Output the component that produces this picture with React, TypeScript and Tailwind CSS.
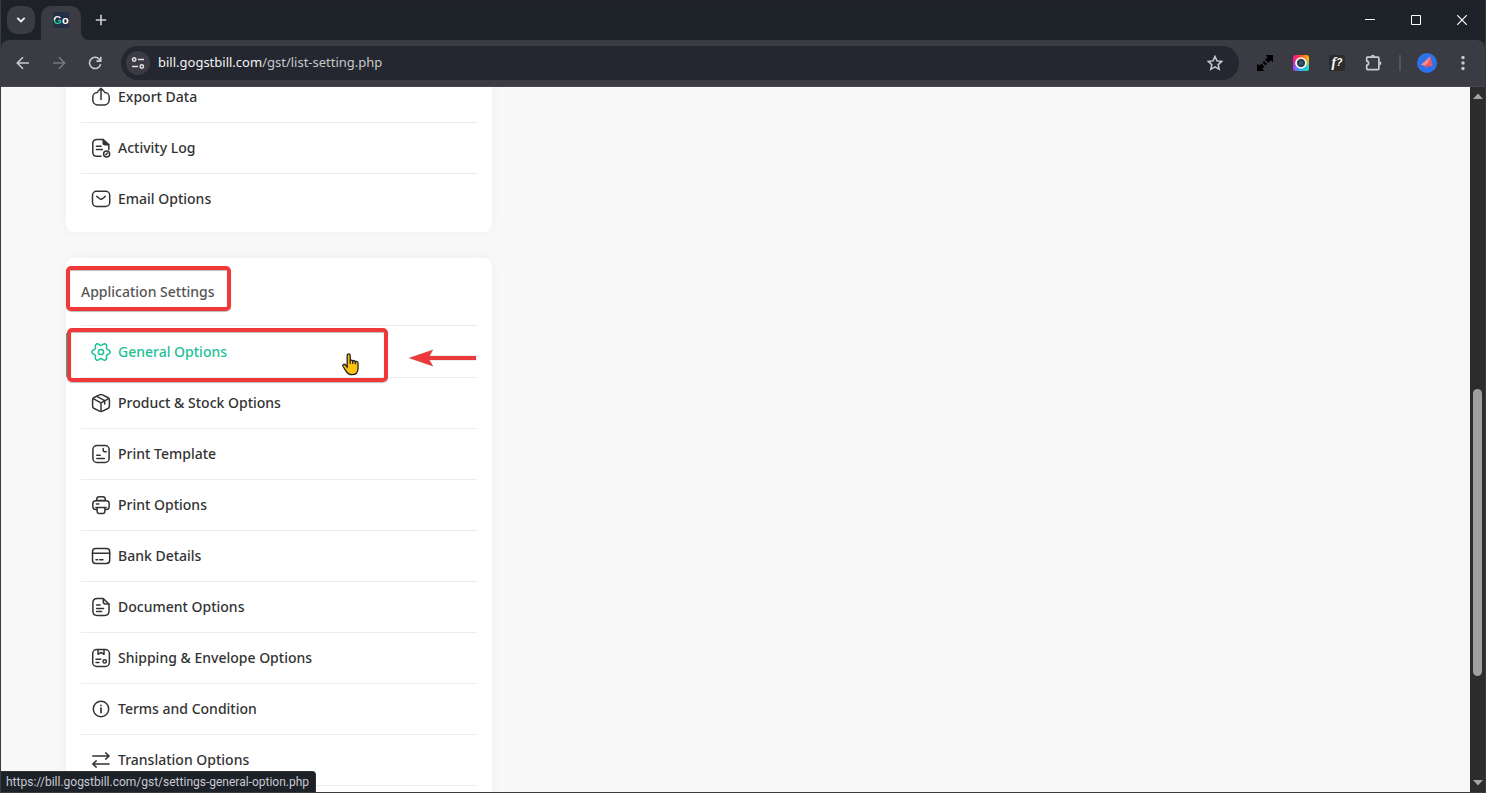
import type { ReactNode } from "react";

const gearOutline =
  "M" +
  Array.from({ length: 72 }, (_, i) => {
    const a = (i / 72) * Math.PI * 2;
    const r = 7.9 + 1.3 * Math.cos(6 * a);
    return `${(10 + r * Math.cos(a)).toFixed(2)} ${(10 + r * Math.sin(a)).toFixed(2)}`;
  }).join("L") +
  "Z";

function Icon({ children, size = 20 }: { children: ReactNode; size?: number }) {
  return (
    <svg
      width={size}
      height={size}
      viewBox="0 0 20 20"
      fill="none"
      stroke="currentColor"
      strokeWidth="1.5"
      strokeLinecap="round"
      strokeLinejoin="round"
      aria-hidden="true"
      className="shrink-0"
    >
      {children}
    </svg>
  );
}

const icons = {
  export: (
    <>
      <path d="M6.5 5.600H6A4.400 4.400 0 0 0 1.800 10v2.800A5 5 0 0 0 6.400 18h7.200a5 5 0 0 0 4.600-5.200V10A4.400 4.400 0 0 0 14 5.600h-.5" />
      <path d="M10 12.600V1.600M7 4.200l3-2.800 3 2.800" />
    </>
  ),
  activity: (
    <>
      <path d="M10 18.300H6.200C3.200 18.300 1.800 17 1.800 14.200V5.600C1.800 2.900 3.200 1.600 6.200 1.600h6L17.800 6.600v5" />
      <path d="M12.200 1.600v3.200c0 1.300.6 1.900 1.900 1.900h3.500" fill="currentColor" />
      <path d="M5.400 8.200h4.600M5.400 11.400h6" />
      <circle cx="15.600" cy="16" r="3" />
      <path d="M14.800 16.800l1.600-1.700" />
    </>
  ),
  mail: (
    <>
      <rect x="1.500" y="2.300" width="17.200" height="15.200" rx="4" />
      <path d="M5.800 7.400l2.600 2.100c1 .8 2.300.8 3.300 0l2.600-2.100" />
    </>
  ),
  gear: (
    <>
      <path d={gearOutline} />
      <circle cx="10" cy="10" r="2.600" />
    </>
  ),
  box: (
    <>
      <path d="M8.500 1.800 3.200 4.500C2.100 5.100 1.600 5.900 1.600 7.100v5.800c0 1.200.5 2 1.600 2.600l5.300 2.700c1 .5 2 .5 3 0l5.300-2.700c1.100-.6 1.600-1.400 1.600-2.600V7.100c0-1.200-.5-2-1.600-2.600l-5.300-2.700c-1-.5-2-.5-3 0z" />
      <path d="M2.200 5.700 10 9.800l7.800-4.100M10 9.800v8.600M5.800 3.400l7.900 4.300v3.400" />
    </>
  ),
  template: (
    <>
      <rect x="1.900" y="1.600" width="16.200" height="16.900" rx="4" />
      <path d="M12.200 4.500v1.700c0 1 .5 1.500 1.500 1.500h1.500M5.800 11.200h3.400M5.800 14.500h7.500" />
    </>
  ),
  printer: (
    <>
      <path d="M5.700 5.600V4.300c0-1.700.8-2.600 2.500-2.600h3.600c1.700 0 2.500.9 2.500 2.600v1.300z" />
      <path d="M5.500 14.500H4.700c-2 0-2.900-1-2.900-3V8.700c0-2 .9-3 2.900-3h10.600c2 0 2.900 1 2.900 3v2.800c0 2-.9 3-2.900 3h-.8" />
      <path d="M6.100 12.400h7.800v3.800c0 1.500-.7 2.300-2.200 2.300H8.300c-1.500 0-2.200-.8-2.200-2.300zM4.900 12.400h10.200M5.500 9.100h2.300" />
    </>
  ),
  card: (
    <>
      <rect x="1.500" y="2.600" width="17.200" height="14.800" rx="3.200" />
      <path d="M1.500 7.200h17.200M5 13.700h1.600M8.600 13.700h3.400" />
    </>
  ),
  document: (
    <>
      <path d="M12.200 1.600h-6C3.300 1.600 1.900 2.900 1.900 5.600v8.700c0 2.800 1.400 4.100 4.300 4.100h7.500c2.900 0 4.300-1.300 4.300-4.100V7z" />
      <path d="M12.300 1.700v3c0 1.500.7 2.200 2.200 2.200h3.300" />
      <path d="M5.600 8h3.500M5.600 11.400h7M5.600 14.600h5" />
    </>
  ),
  shipping: (
    <>
      <rect x="1.700" y="1.600" width="16.700" height="16.900" rx="4" />
      <path d="M7 1.800v4.500l3-1.800 3 1.800V1.800M5 11.300h4.700M5 14.600h3" />
      <circle cx="13.700" cy="13.400" r="1.700" />
    </>
  ),
  info: (
    <>
      <circle cx="10" cy="10" r="7.700" />
      <path d="M10 9v4.600M10 6.300v.2" strokeWidth="1.700" />
    </>
  ),
  swap: <path d="M1.800 6h16.300M14.700 2.900 18.100 6l-3.400 3.100M18.100 14H1.800M5.200 17.100 1.800 14l3.400-3.100" />,
};

function MenuRow({ icon, label, active, last }: { icon: ReactNode; label: string; active?: boolean; last?: boolean }) {
  return (
    <li className={last ? "" : "border-b border-[#ebebeb]"}>
      <a
        href="#"
        className={`flex h-[50px] items-center gap-[7px] pl-2.5 text-sm font-medium ${active ? "text-[#1dbf96]" : "text-[#333]"}`}
      >
        <Icon>{icon}</Icon>
        {label}
      </a>
    </li>
  );
}

function BarButton({ label, children }: { label: string; children: ReactNode }) {
  return (
    <button type="button" aria-label={label} className="flex size-7 shrink-0 items-center justify-center">
      {children}
    </button>
  );
}

function TitleBar() {
  return (
    <header className="flex h-10 shrink-0 items-center border-t-2 border-[#202125] bg-[#1d2128] pl-1.5 text-white">
      <button type="button" aria-label="Search tabs" className="mb-0.5 flex size-7 items-center justify-center rounded-[10px] bg-[#3a3b43]">
        <svg width="10" height="6" viewBox="0 0 10 6" fill="none" stroke="#f0f0f2" strokeWidth="1.800">
          <path d="M1.300.8 5 4.500 8.700.8" />
        </svg>
      </button>
      <div className="ml-1.5 flex h-[34px] w-10 items-start justify-center self-end rounded-t-[10px] bg-[#3a3b43] pt-1.5">
        <span className="flex size-4 items-center justify-center bg-[#253044] font-['Liberation_Sans',sans-serif] text-[11px] leading-none font-bold text-white">
          <span className="bg-linear-to-b from-white from-50% to-[#20c997] to-50% bg-clip-text text-transparent">G</span>o
        </span>
      </div>
      <svg width="8" height="8" viewBox="0 0 8 8" className="self-end" aria-hidden="true">
        <path d="M0 0v8h8A8 8 0 0 1 0 0z" fill="#3a3b43" />
      </svg>
      <button type="button" aria-label="New tab" className="mb-0.5 flex size-6 items-center justify-center">
        <svg width="12" height="12" viewBox="0 0 12 12" stroke="#d0d1d6" strokeWidth="1.600">
          <path d="M6 .8v10.400M.8 6h10.400" />
        </svg>
      </button>
      <div className="mb-0.5 ml-auto flex h-full">
        <button type="button" aria-label="Minimize" className="flex w-[46px] items-center justify-center">
          <svg width="10" height="10" viewBox="0 0 10 10"><path d="M0 4h10v1H0z" fill="white" /></svg>
        </button>
        <button type="button" aria-label="Maximize" className="flex w-[46px] items-center justify-center">
          <svg width="10" height="10" viewBox="0 0 10 10" fill="none" stroke="white"><path d="M.5.5h9v9h-9z" /></svg>
        </button>
        <button type="button" aria-label="Close" className="flex w-[46px] items-center justify-center">
          <svg width="10" height="10" viewBox="0 0 10 10" stroke="white" strokeWidth="1.200"><path d="m.2.2 9.600 9.600M9.800.2.200 9.800" /></svg>
        </button>
      </div>
    </header>
  );
}

function Toolbar() {
  return (
    <div className="bg-[#1d2128]">
      <div className="flex h-[47px] items-center gap-2 rounded-t-lg border-b border-[#4a464d] bg-[#3a3b43] px-2">
        <BarButton label="Back">
          <svg width="14" height="14" viewBox="0 0 14 14" fill="none" stroke="#c9cad2" strokeWidth="1.600"><path d="M13 7H1.500M7 1.300 1.300 7 7 12.700" /></svg>
        </BarButton>
        <BarButton label="Forward">
          <svg width="14" height="14" viewBox="0 0 14 14" fill="none" stroke="#75767e" strokeWidth="1.600"><path d="M1 7h11.500M7 1.300 12.700 7 7 12.700" /></svg>
        </BarButton>
        <BarButton label="Reload">
          <svg width="14" height="14" viewBox="0 0 14 14" fill="none" stroke="#c9cad2" strokeWidth="1.600"><path d="M12.600 8.100A5.600 5.600 0 1 1 11.500 3.400L12.600 4.600M12.800.7v4.400H8.400" /></svg>
        </BarButton>
        <div className="mx-1 flex h-[34px] min-w-0 flex-1 items-center rounded-full bg-[#24272f] pr-2.5 pl-[5px]">
          <button type="button" aria-label="View site information" className="flex size-6 shrink-0 items-center justify-center rounded-full bg-[#3a3b43]">
            <svg width="14" height="14" viewBox="0 0 14 14" fill="none" stroke="#e2e2e6" strokeWidth="1.500">
              <circle cx="3.200" cy="3.500" r="1.700" />
              <path d="M7 3.500h6M1 10.500h6" />
              <circle cx="10.800" cy="10.500" r="1.700" />
            </svg>
          </button>
          <a href="#" className="ml-2 flex-1 truncate text-[13px] text-[#c7c8cc]">
            <span className="text-[#f3f3f4]">bill.gogstbill.com</span>/gst/list-setting.php
          </a>
          <BarButton label="Bookmark this page">
            <svg width="16" height="16" viewBox="0 0 16 16" fill="none" stroke="#c9cad2" strokeWidth="1.500"><path d="m8 1.500 2 4.400 4.800.5-3.600 3.200 1 4.700L8 11.900l-4.200 2.400 1-4.700L1.200 6.400 6 5.900z" /></svg>
          </BarButton>
        </div>
        <BarButton label="Full page capture">
          <svg width="16" height="16" viewBox="0 0 16 16" fill="black">
            <path d="M8.500 0H16v7.500l-2.200-2.200-2.600 2.600-3.100-3.100 2.600-2.600zM7.500 16H0V8.500l2.200 2.200 2.100-2.100 3.100 3.100-2.100 2.100z" />
            <path d="m5.500 7.600 1.600-1.600 2.900 2.900-1.600 1.600z" />
          </svg>
        </BarButton>
        <BarButton label="Screen recorder">
          <svg width="16" height="16" viewBox="0 0 16 16">
            <defs>
              <linearGradient id="recTop"><stop stopColor="#f2188f" /><stop offset=".5" stopColor="#ff4a2a" /><stop offset="1" stopColor="#ffc412" /></linearGradient>
              <linearGradient id="recBottom"><stop stopColor="#a93cf0" /><stop offset=".5" stopColor="#22b4f0" /><stop offset="1" stopColor="#1fdcc0" /></linearGradient>
              <linearGradient id="recFade" x2="0" y2="1"><stop offset=".25" stopColor="black" /><stop offset=".8" stopColor="white" /></linearGradient>
              <mask id="recMask"><path d="M0 0h16v16H0z" fill="url(#recFade)" /></mask>
            </defs>
            <rect width="16" height="16" rx="3" fill="url(#recTop)" />
            <rect width="16" height="16" rx="3" fill="url(#recBottom)" mask="url(#recMask)" />
            <circle cx="8" cy="8" r="5" fill="#34495a" stroke="white" strokeWidth="1.600" />
            <circle cx="8" cy="8" r="2.600" fill="#3f5a70" stroke="#1f2c36" strokeWidth=".8" />
          </svg>
        </BarButton>
        <BarButton label="Font finder">
          <span className="flex size-4 items-center justify-center rounded-[2px] bg-[#2c2c2c] font-['Liberation_Serif',serif] text-sm leading-none font-bold text-white italic">
            f<span className="font-['Liberation_Sans',sans-serif] text-[10px]">?</span>
          </span>
        </BarButton>
        <BarButton label="Extensions">
          <svg width="18" height="18" viewBox="0 0 18 18" fill="none" stroke="#c9cad2" strokeWidth="1.700" strokeLinejoin="round">
            <path d="M3.200 3.200h10.700c.7 0 1 .3 1 1v10.400c0 .7-.3 1-1 1H3.700c-.7 0-1-.3-1-1v-3.400c2.500-.2 2.500-3.800 0-4V3.700z" />
            <path d="M6.800 2.700a2 2 0 0 1 4 0zM15.400 7.200a2 2 0 0 1 0 4z" fill="#c9cad2" stroke="none" />
          </svg>
        </BarButton>
        <div className="flex w-2.5 justify-center"><span className="h-4 w-0.5 bg-[#53545c]" /></div>
        <BarButton label="Profile">
          <svg width="20" height="20" viewBox="0 0 20 20">
            <circle cx="10" cy="10" r="10" fill="#2c72ed" />
            <path d="M13.400 3.200 9.800 12l5.800 1.200z" fill="#ef5b5b" />
            <path d="M13.400 3.200 3.800 12l6 1z" fill="#ff8b80" />
            <path d="m8.400 12.200-.6 3.400 3-2 5.200-.4-6-2.200z" fill="#e0566a" />
          </svg>
        </BarButton>
        <BarButton label="Menu">
          <svg width="4" height="16" viewBox="0 0 4 16" fill="#c9cad2"><circle cx="2" cy="2.500" r="1.700" /><circle cx="2" cy="8" r="1.700" /><circle cx="2" cy="13.500" r="1.700" /></svg>
        </BarButton>
      </div>
    </div>
  );
}

function ScrollRail() {
  return (
    <div className="flex w-[15px] shrink-0 flex-col items-center bg-[#2c2c2c] py-1.5" aria-hidden="true">
      <svg width="10" height="6" viewBox="0 0 10 6" fill="#a3a3a3"><path d="M0 6 5 .5 10 6z" /></svg>
      <div className="grow-[291]" />
      <div className="w-[9px] grow-[288] rounded-full bg-[#9f9f9f]" />
      <div className="grow-[104]" />
      <svg width="10" height="6" viewBox="0 0 10 6" fill="#a3a3a3"><path d="M0 0 5 5.500 10 0z" /></svg>
    </div>
  );
}

export default function App() {
  return (
    <div className="relative flex h-screen flex-col overflow-hidden border-x border-b border-[#3b3b3d] bg-[#f8f8f8] font-['Noto_Sans',sans-serif]">
      <TitleBar />
      <Toolbar />
      <div className="flex min-h-0 flex-1">
        <main className="flex-1 overflow-hidden">
          <div className="ml-[65px] w-[426px]">
            <section className="-mt-[15px] rounded-lg bg-white px-[15px] pb-2 shadow-[0_0_12px_rgba(0,0,0,0.04)]">
              <ul>
                <MenuRow icon={icons.export} label="Export Data" />
                <MenuRow icon={icons.activity} label="Activity Log" />
                <MenuRow icon={icons.mail} label="Email Options" last />
              </ul>
            </section>
            <section className="relative mt-[26px] rounded-lg bg-white px-[15px] pb-4 shadow-[0_0_12px_rgba(0,0,0,0.04)]">
              <h2 className="flex h-[68px] items-center border-b border-[#ebebeb] text-sm font-medium text-[#555]">Application Settings</h2>
              <ul className="pt-px">
                <MenuRow icon={icons.gear} label="General Options" active />
                <MenuRow icon={icons.box} label="Product & Stock Options" />
                <MenuRow icon={icons.template} label="Print Template" />
                <MenuRow icon={icons.printer} label="Print Options" />
                <MenuRow icon={icons.card} label="Bank Details" />
                <MenuRow icon={icons.document} label="Document Options" />
                <MenuRow icon={icons.shipping} label="Shipping & Envelope Options" />
                <MenuRow icon={icons.info} label="Terms and Condition" />
                <MenuRow icon={icons.swap} label="Translation Options" />
              </ul>
              <span className="absolute top-[75px] left-0 h-11 w-0.5 bg-[#1dbf96]" />
              <span className="absolute top-2 left-0 h-[45px] w-[165px] rounded-[5px] border-4 border-[#f03838] shadow-[0_1px_1px_rgba(90,90,90,0.4),inset_0_1px_1px_rgba(90,90,90,0.4)]" />
              <span className="absolute top-[70px] left-px h-[54px] w-[321px] rounded-[5px] border-4 border-[#f03838] shadow-[0_1px_1px_rgba(90,90,90,0.4),inset_0_1px_1px_rgba(90,90,90,0.4)]" />
              <svg width="68" height="18" viewBox="0 0 68 18" className="absolute top-[91px] left-[343px]" aria-hidden="true">
                <path d="M0 9 24 .8 20.500 7H67v4H20.500L24 17.200z" fill="#f03838" stroke="#8a6060" strokeOpacity=".5" strokeWidth=".5" />
              </svg>
              <svg width="18" height="23" viewBox="0 0 18 23" className="absolute top-[95px] left-[276px]" aria-hidden="true">
                <path d="M5.200 2.400c0-2 3-2 3 0v5.400c.5-1 2.500-.8 2.600.3.600-.7 2.400-.5 2.500.7.800-.6 2.700-.2 2.700 1.300v5.400c0 3.800-2.200 6.200-6.200 6.200-3.100 0-4.700-1.500-5.900-3.800L1 13.300c-.8-1.600 1.300-2.800 2.500-1.300l1.700 2z" fill="#ffc20e" stroke="#222" strokeWidth="1.300" />
                <path d="M8.200 7.500V11M10.800 8v3M13.300 9v2.200" stroke="#222" strokeWidth="1.200" />
              </svg>
            </section>
          </div>
        </main>
        <ScrollRail />
      </div>
      <div className="absolute bottom-0 left-0 flex h-[21px] items-center rounded-tr border-t border-r border-[#303238] bg-[#1d2128] pr-1.5 pl-[5px] font-['Roboto',sans-serif] text-[12px] text-[#c9cad2]">
        https://bill.gogstbill.com/gst/settings-general-option.php
      </div>
    </div>
  );
}
